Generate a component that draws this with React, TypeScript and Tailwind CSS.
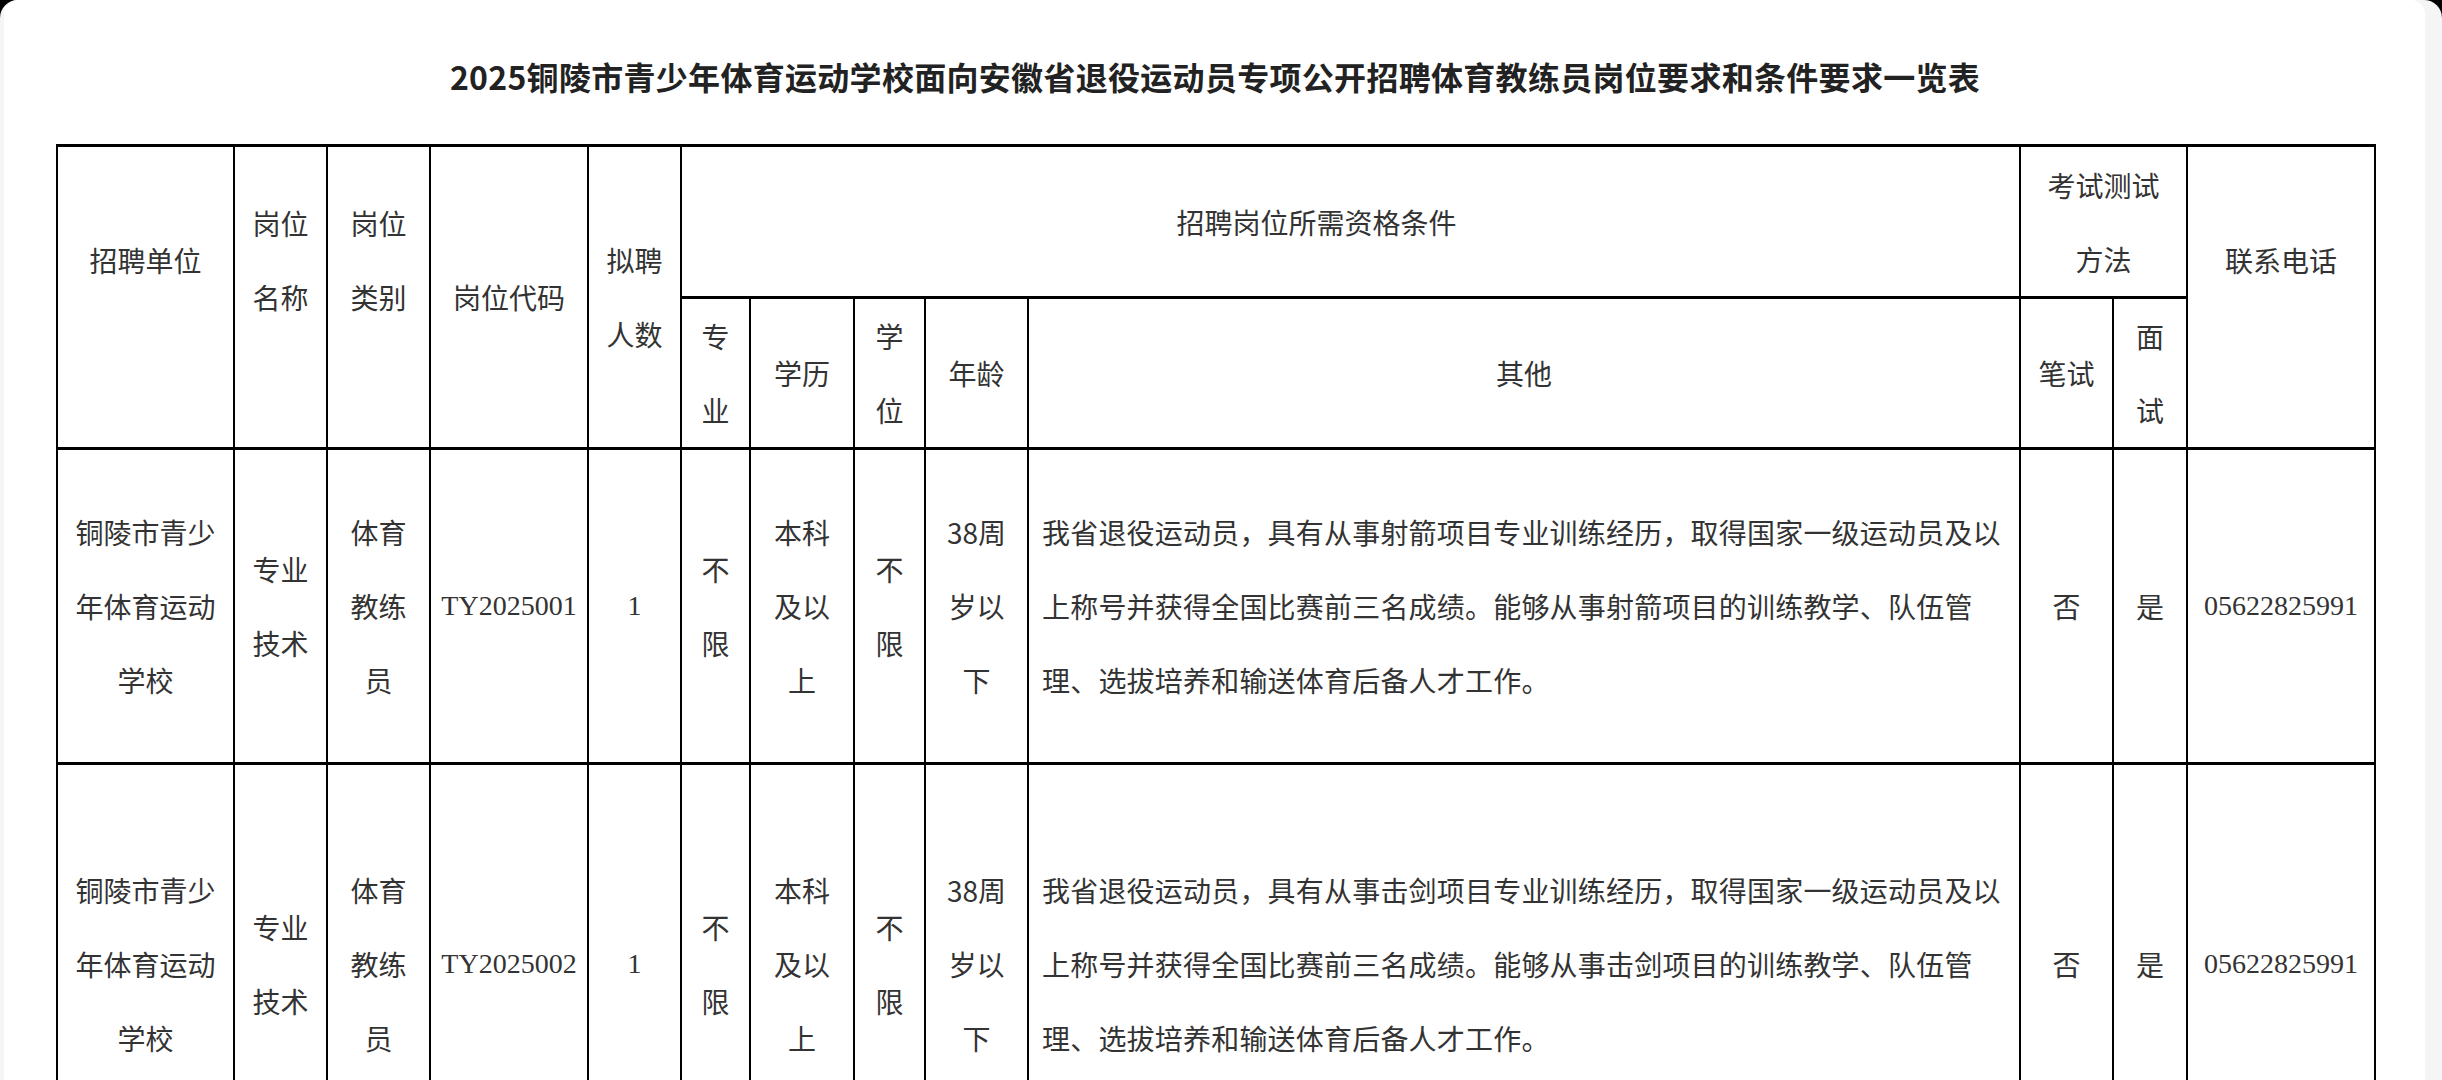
// 2025 铜陵市青少年体育运动学校 招聘岗位一览表

const cjk = "font-['Noto_Sans_CJK_SC','Noto_Sans',sans-serif]";
const serif = "font-['Liberation_Serif','Noto_Sans_CJK_SC',serif]";

const cell =
  "border-x-2 border-y-[3px] border-black text-center align-middle leading-[74px] text-[28px] font-normal text-[#333] p-0";

const cols = [177, 93, 103, 158, 93, 69, 104, 71, 103, 992, 93, 74, 188];

interface Post {
  code: string;
  sport: string;
  height: string;
}

const posts: Post[] = [
  { code: "TY2025001", sport: "射箭", height: "h-[315px]" },
  { code: "TY2025002", sport: "击剑", height: "h-[400px]" },
];

function Lines({ items }: { items: string[] }) {
  return (
    <>
      {items.map((t, i) => (
        <div key={i} className="whitespace-nowrap">
          {t === "" ? "\u00a0" : t}
        </div>
      ))}
    </>
  );
}

function PostRow({ post }: { post: Post }) {
  const s = post.sport;
  return (
    <tr className={post.height}>
      <td className={cell}>
        <Lines items={["铜陵市青少", "年体育运动", "学校"]} />
      </td>
      <td className={cell}>
        <Lines items={["专业", "技术"]} />
      </td>
      <td className={cell}>
        <Lines items={["体育", "教练", "员"]} />
      </td>
      <td className={`${cell} ${serif} text-[26px]`}>{post.code}</td>
      <td className={`${cell} ${serif} text-[27px]`}>1</td>
      <td className={cell}>
        <Lines items={["不", "限"]} />
      </td>
      <td className={cell}>
        <Lines items={["本科", "及以", "上"]} />
      </td>
      <td className={cell}>
        <Lines items={["不", "限"]} />
      </td>
      <td className={cell}>
        <Lines items={["38周", "岁以", "下"]} />
      </td>
      <td className={`${cell} text-left pl-[13px] tracking-[0.2px]`}>
        <Lines
          items={[
            `我省退役运动员，具有从事${s}项目专业训练经历，取得国家一级运动员及以`,
            `上称号并获得全国比赛前三名成绩。能够从事${s}项目的训练教学、队伍管`,
            "理、选拔培养和输送体育后备人才工作。",
          ]}
        />
      </td>
      <td className={cell}>否</td>
      <td className={cell}>是</td>
      <td className={`${cell} ${serif}`}>05622825991</td>
    </tr>
  );
}

export default function App() {
  return (
    <div className={`w-full h-[1080px] overflow-hidden bg-black ${cjk}`}>
      <div className="h-full rounded-t-[18px] bg-[#f5f5f5] pl-[4px] pr-[17px]">
        <div className="h-full rounded-t-[14px] bg-white pl-[52px] pr-[51px]">
          {/* Title */}
          <h1 className="pt-[56px] pb-[48px] text-center text-[32px] leading-[40px] font-bold text-[#222] tracking-[0.3px]">
            2025铜陵市青少年体育运动学校面向安徽省退役运动员专项公开招聘体育教练员岗位要求和条件要求一览表
          </h1>

          {/* Table */}
          <table className="table-fixed border-collapse w-[2318px]">
            <colgroup>
              {cols.map((w, i) => (
                <col key={i} style={{ width: w }} />
              ))}
            </colgroup>
            <thead>
              <tr className="h-[152px]">
                <th rowSpan={2} className={cell}>
                  <Lines items={["招聘单位", ""]} />
                </th>
                <th rowSpan={2} className={cell}>
                  <Lines items={["岗位", "名称", ""]} />
                </th>
                <th rowSpan={2} className={cell}>
                  <Lines items={["岗位", "类别", ""]} />
                </th>
                <th rowSpan={2} className={cell}>
                  岗位代码
                </th>
                <th rowSpan={2} className={cell}>
                  <Lines items={["拟聘", "人数"]} />
                </th>
                <th colSpan={5} className={`${cell} pr-[68px]`}>
                  招聘岗位所需资格条件
                </th>
                <th colSpan={2} className={cell}>
                  <Lines items={["考试测试", "方法"]} />
                </th>
                <th rowSpan={2} className={cell}>
                  <Lines items={["联系电话", ""]} />
                </th>
              </tr>
              <tr className="h-[151px]">
                <th className={cell}>
                  <Lines items={["专", "业"]} />
                </th>
                <th className={cell}>学历</th>
                <th className={cell}>
                  <Lines items={["学", "位"]} />
                </th>
                <th className={cell}>年龄</th>
                <th className={cell}>其他</th>
                <th className={cell}>笔试</th>
                <th className={cell}>
                  <Lines items={["面", "试"]} />
                </th>
              </tr>
            </thead>
            <tbody>
              {posts.map((p) => (
                <PostRow key={p.code} post={p} />
              ))}
            </tbody>
          </table>
        </div>
      </div>
    </div>
  );
}
